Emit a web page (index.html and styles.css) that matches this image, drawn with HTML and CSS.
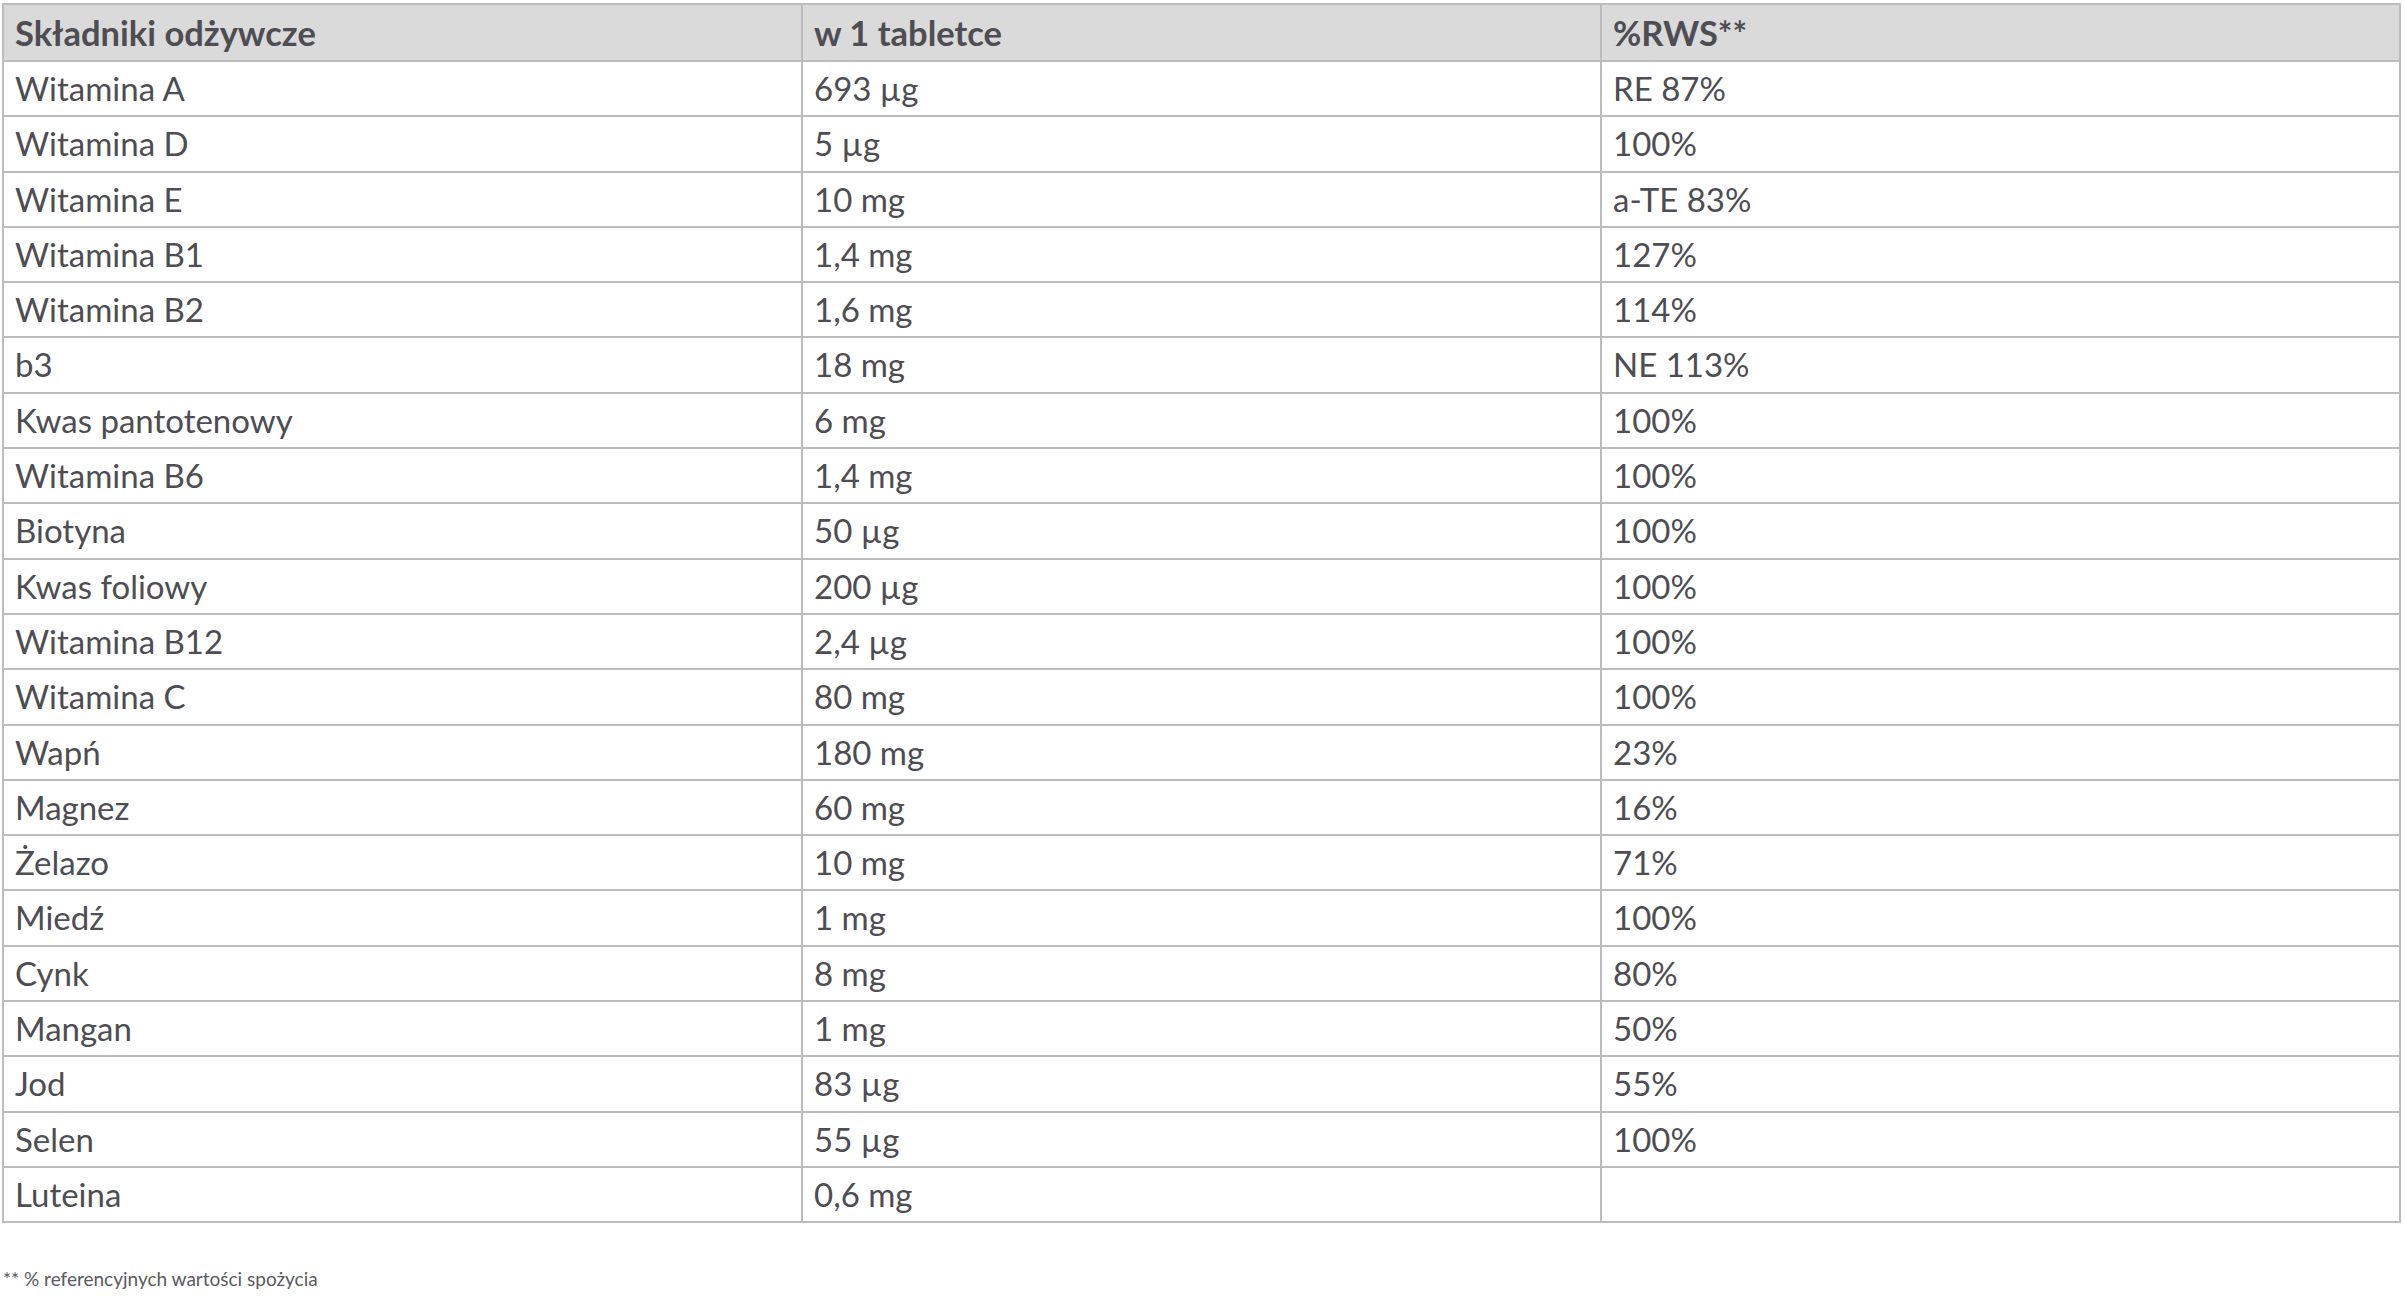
FILE: index.html
```html
<!DOCTYPE html>
<html lang="pl">
<head>
<meta charset="utf-8">
<title>Składniki odżywcze</title>
<link rel="stylesheet" href="styles.css">
</head>
<body>
<div class="page">
  <table class="nutri">
    <thead>
      <tr><th>Składniki odżywcze</th><th>w 1 tabletce</th><th>%RWS**</th></tr>
    </thead>
    <tbody>
      <tr><td>Witamina A</td><td>693 µg</td><td>RE 87%</td></tr>
      <tr><td>Witamina D</td><td>5 µg</td><td>100%</td></tr>
      <tr><td>Witamina E</td><td>10 mg</td><td>a-TE 83%</td></tr>
      <tr><td>Witamina B1</td><td>1,4 mg</td><td>127%</td></tr>
      <tr><td>Witamina B2</td><td>1,6 mg</td><td>114%</td></tr>
      <tr><td>b3</td><td>18 mg</td><td>NE 113%</td></tr>
      <tr><td>Kwas pantotenowy</td><td>6 mg</td><td>100%</td></tr>
      <tr><td>Witamina B6</td><td>1,4 mg</td><td>100%</td></tr>
      <tr><td>Biotyna</td><td>50 µg</td><td>100%</td></tr>
      <tr><td>Kwas foliowy</td><td>200 µg</td><td>100%</td></tr>
      <tr><td>Witamina B12</td><td>2,4 µg</td><td>100%</td></tr>
      <tr><td>Witamina C</td><td>80 mg</td><td>100%</td></tr>
      <tr><td>Wapń</td><td>180 mg</td><td>23%</td></tr>
      <tr><td>Magnez</td><td>60 mg</td><td>16%</td></tr>
      <tr><td>Żelazo</td><td>10 mg</td><td>71%</td></tr>
      <tr><td>Miedź</td><td>1 mg</td><td>100%</td></tr>
      <tr><td>Cynk</td><td>8 mg</td><td>80%</td></tr>
      <tr><td>Mangan</td><td>1 mg</td><td>50%</td></tr>
      <tr><td>Jod</td><td>83 µg</td><td>55%</td></tr>
      <tr><td>Selen</td><td>55 µg</td><td>100%</td></tr>
      <tr><td>Luteina</td><td>0,6 mg</td><td></td></tr>
    </tbody>
  </table>
  <p class="footnote">** % referencyjnych wartości spożycia</p>
</div>
</body>
</html>
```

FILE: styles.css
```css
html, body {
  margin: 0;
  padding: 0;
  background: #ffffff;
}

body {
  font-family: "Lato", "Liberation Sans", sans-serif;
  color: #4d4d53;
}

.page {
  padding: 3px 4px 0 2px;
}

.nutri {
  width: 100%;
  border-collapse: collapse;
  table-layout: fixed;
}

.nutri th,
.nutri td {
  border: 2px solid #bcbcbc;
  text-align: left;
  padding: 0 10px 0 11px;
  white-space: nowrap;
}

.nutri th {
  background: #dadada;
  font-weight: 700;
  font-size: 34.5px;
  height: 55px;
  line-height: 55px;
}

.nutri td {
  font-weight: 400;
  font-size: 33px;
  height: 53.3px;
  line-height: 53.3px;
}

.footnote {
  margin: 44px 0 0 1px;
  font-size: 19px;
  color: #5a5a5f;
}
```
